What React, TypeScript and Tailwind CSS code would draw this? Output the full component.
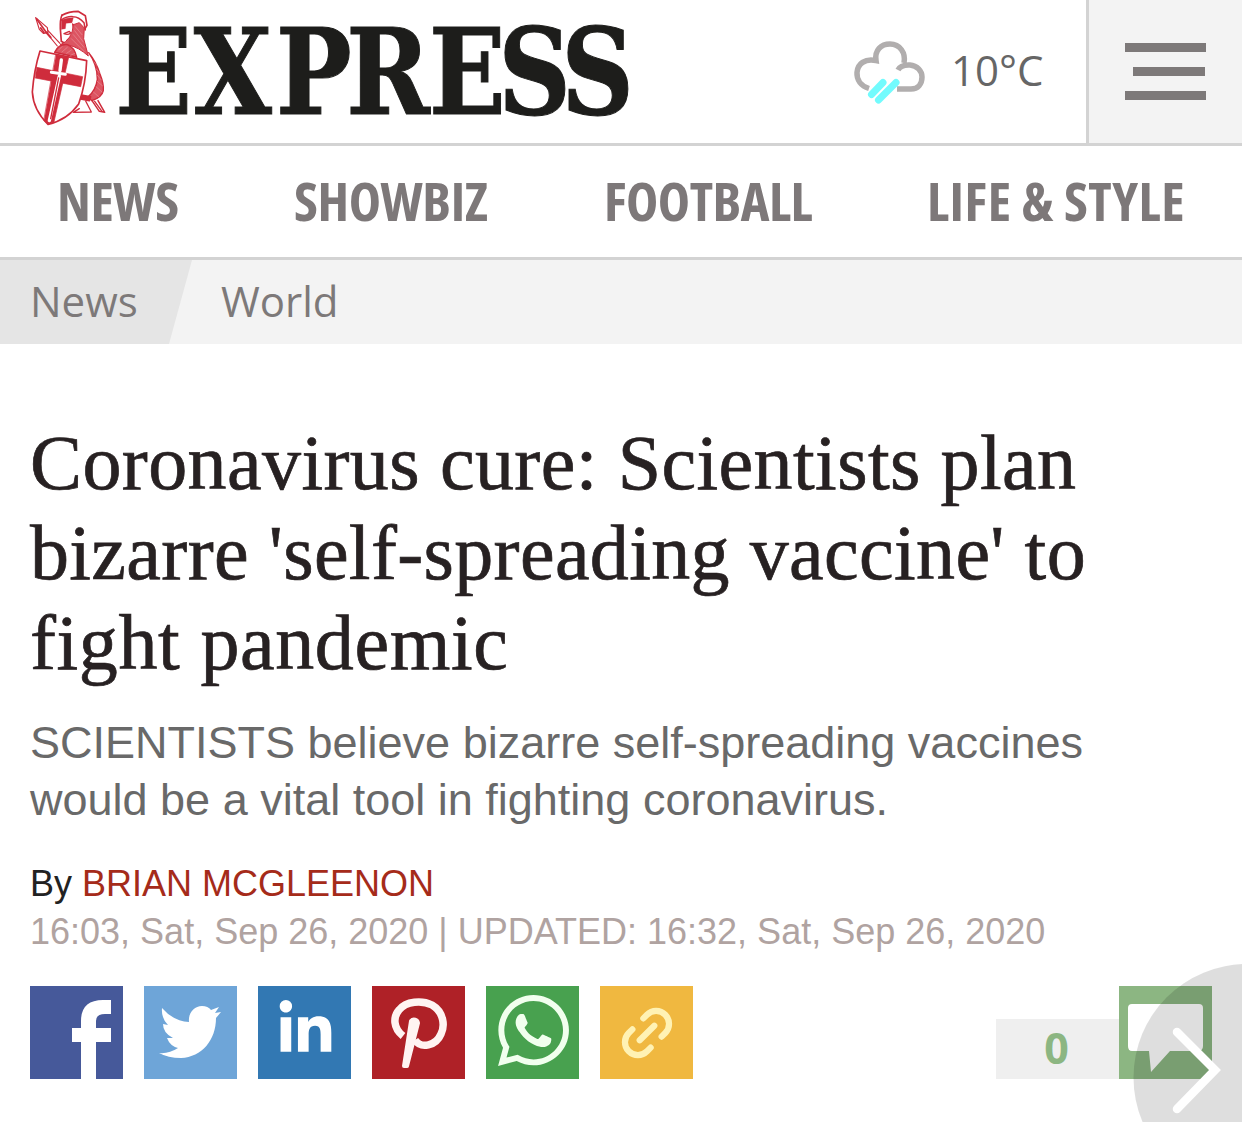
import type { ReactNode } from 'react';
import { FaLinkedinIn, FaWhatsapp } from 'react-icons/fa';
import { Link2 } from 'lucide-react';

function Crusader() {
  return (
    <g transform="translate(20 0) scale(0.3333)" stroke="#cf2c3c" fill="none" strokeWidth="4.5" strokeLinejoin="round" strokeLinecap="round">
      {/* lance */}
      <path d="M47 53 L82 83 L84 98 L70 100 L58 88 Z" strokeWidth="3.5" />
      <path d="M50 57 L76 93 M62 84 L72 98" strokeWidth="5" />
      <path d="M76 94 L112 138 M84 92 L120 130" strokeWidth="3.5" />
      <path d="M78 96 L92 112" strokeWidth="6" />
      {/* helmet and face */}
      <path d="M126 46 Q146 34 174 34 L196 47 L201 76 L195 86" strokeWidth="5" />
      <path d="M124 60 Q140 48 160 50 Q176 50 192 68 L196 90" strokeWidth="4.5" />
      <path d="M126 45 Q120 58 121 86 L124 124 L134 130" strokeWidth="5" />
      <path d="M124 60 Q140 53 160 53 L156 68 L138 70 L136 86 L124 88 Z" fill="#cf2c3c" strokeWidth="1" />
      <path d="M132 101 Q144 106 152 99 L148 94 Z M140 122 Q156 114 162 90 L158 72" strokeWidth="4" />
      <path d="M160 74 L178 68 L193 84 L191 116 L205 168 Q176 142 148 136 Q130 132 120 135 Q158 118 160 74 Z" fill="#dc5562" strokeWidth="3" />
      <path d="M166 80 L186 104 M164 92 L190 126 M160 104 L192 142 M154 116 L192 154" stroke="#efa0a8" strokeWidth="1.5" />
      {/* mail collar */}
      <path d="M104 157 Q116 132 142 134 Q164 142 170 172 L144 166 Z" fill="#dc5562" />
      <path d="M116 150 L126 140 M126 156 L142 142 M140 160 L154 150 M152 166 L164 160" stroke="#efa0a8" strokeWidth="1.5" />
      {/* cloak */}
      <path d="M206 158 Q228 184 240 222 Q252 252 250 272 Q246 292 216 302 L203 292 Q228 270 232 238 Q232 194 206 158 Z" fill="#dc5562" strokeWidth="4" />
      <path d="M222 186 L230 196 M228 206 L238 218 M232 226 L244 240 M232 244 L248 258 M228 260 L246 276 M220 276 L236 290" stroke="#efa0a8" strokeWidth="1.5" />
      {/* belt and scabbard */}
      <path d="M180 284 L212 290 L208 302 L178 296 Z" fill="#cf2c3c" />
      <path d="M197 303 L214 336 L160 337 L178 326" strokeWidth="4" />
      <path d="M216 302 L238 334 L254 337 L234 302" />
      <path d="M224 304 L246 334" strokeWidth="4" />
      {/* shield */}
      <path d="M60 153 L200 182 Q198 250 176 312 Q142 360 84 373 Q40 330 37 276 Q42 210 60 153 Z" fill="#fff" strokeWidth="5" />
      <path d="M50 202 L188 230 L182 260 L46 234 Z" fill="#cf2c3c" strokeWidth="2" />
      <path d="M108 164 L146 172 L102 366 L84 372 L72 362 Z" fill="#cf2c3c" strokeWidth="2" />
      {/* sword */}
      <path d="M124 180 L120 212 M118 228 L88 362" stroke="#fff" strokeWidth="10" />
      <path d="M94 217 L136 223" stroke="#fff" strokeWidth="9" />
      <path d="M116 234 L92 356" strokeWidth="4" />
    </g>
  );
}

function Logo() {
  return (
    <svg width="640" height="143" viewBox="0 0 640 143">
      <Crusader />
      <text
        transform="scale(0.94 1)"
        x="122.7 206 293.5 368.4 456.5 530 597"
        y="114"
        fill="#1d1d1b"
        stroke="#1d1d1b"
        strokeWidth="1"
        className="text-[119px] font-bold [font-family:'DejaVu_Serif',serif] [font-stretch:75%]"
      >
        EXPRESS
      </text>
    </svg>
  );
}

function RainCloud() {
  return (
    <svg width="72" height="66" viewBox="0 0 72 66" fill="none" className="mt-[2px]">
      <path
        d="M16 48.500 C8 46 3.500 40 4 32.500 C4.500 24 12 18 23 20.500 C21.500 10 28 4 37 4 C47 4 53 13 51 23 M45 30 C46 28 49 24.500 57 25 C64 25.500 69 31 69 37 C69 44 65 49 58 49 L44 49"
        stroke="#b1aeae"
        strokeWidth="5.500"
      />
      <path d="M30 42.500 L18.500 54.500 M43 42.500 L25.500 60" stroke="#72fbfd" strokeWidth="7" strokeLinecap="round" />
    </svg>
  );
}

const nav = [
  { label: 'NEWS', cls: 'ml-[57px] w-[237px] tracking-[-0.4px]' },
  { label: 'SHOWBIZ', cls: 'w-[310px] tracking-[-0.4px]' },
  { label: 'FOOTBALL', cls: 'w-[323px] tracking-[-0.5px]' },
  { label: 'LIFE & STYLE', cls: 'tracking-[0.5px]' },
];

function Tile({ bg, children }: { bg: string; children: ReactNode }) {
  return <a className={`block h-[93px] w-[93px] shrink-0 overflow-hidden text-white ${bg}`}>{children}</a>;
}

function ShareRow() {
  return (
    <div className="flex gap-[21px]">
      <Tile bg="bg-[#46599a]">
        <svg width="93" height="93" fill="#fff">
          <path d="M51 93V56H42V42H51V35Q51 14 73 14H81V28H75Q66 28 66 35V42H81V56H66V93Z" />
        </svg>
      </Tile>
      <Tile bg="bg-[#6ea5d8]">
        <svg width="93" height="93" fill="#fff">
          <path d="M18 22 Q29 35 45 36 C44 27 50 20 58 20 Q64 20 67 24 L75 21 L71 27 L77 26 L72 32 C72 54 58 71 37 72 Q24 72 15 67 Q25 68 34 62 Q26 60 23 52 L29 52 Q19 47 19 38 L24 39 Q17 32 18 22Z" />
        </svg>
      </Tile>
      <Tile bg="bg-[#3278b3]">
        <FaLinkedinIn size={59} className="mt-[14px] ml-[18px]" />
      </Tile>
      <Tile bg="bg-[#af2127]">
        <svg width="93" height="93" fill="none" stroke="#fff4f2" strokeWidth="7.5">
          <path d="M31 50 C21 42 21 31 27 24 C34 15 50 14 60 19 C72 26 73 40 69 48 C64 60 49 63 43 54" />
          <path d="M39 35 a4 4 0 0 1 7 2 L35 80 L32 80 Z" strokeWidth="4" fill="#fff4f2" strokeLinejoin="round" />
        </svg>
      </Tile>
      <Tile bg="bg-[#48a14f]">
        <FaWhatsapp size={81} className="mt-[4px] ml-[7px] text-[#f1ffee]" />
      </Tile>
      <Tile bg="bg-[#f0b840]">
        <Link2 size={62} strokeWidth={2.4} className="mt-[16px] ml-[16px] -rotate-45 text-[#fff2b4]" />
      </Tile>
    </div>
  );
}

function Comments() {
  return (
    <div className="mr-[30px] ml-auto flex items-end">
      <div className="flex h-[60px] w-[123px] items-center justify-center bg-[#efefef] pr-[2px] pb-[2px] text-[43px] font-bold text-[#8cb682] [font-family:'Open_Sans',sans-serif]">
        0
      </div>
      <svg width="93" height="93" className="bg-[#8cb682]" fill="#fff">
        <path d="M13 18H80Q84 18 84 22V60Q84 65 79 65H51L32 86L30 65H13Q9 65 9 60V22Q9 18 13 18Z" />
      </svg>
    </div>
  );
}

export default function App() {
  return (
    <div className="relative h-[1122px] w-[1242px] overflow-hidden bg-white [font-family:'Liberation_Sans',Arial,sans-serif]">
      <header className="flex h-[146px] border-b-[3px] border-[#d3d3d3]">
        <Logo />
        <div className="ml-auto flex items-center">
          <RainCloud />
          <span className="ml-[26px] w-[135px] pb-[4px] text-[42px] leading-none text-[#666] [font-family:'Open_Sans',sans-serif]">10°C</span>
        </div>
        <button className="flex w-[156px] flex-col justify-center gap-[15px] border-l-[3px] border-[#d3d3d3] bg-[#f3f3f3] pl-[36px]">
          <span className="h-[9px] w-[81px] bg-[#7d7979]" />
          <span className="ml-[8px] h-[9px] w-[72px] bg-[#7d7979]" />
          <span className="h-[9px] w-[81px] bg-[#7d7979]" />
        </button>
      </header>

      <nav className="flex h-[114px] items-center border-b-[3px] border-[#d3d3d3] pb-[3px] text-[54.5px] leading-none font-bold whitespace-nowrap text-[#7d7879] [font-family:'Open_Sans',sans-serif] [font-stretch:75%]">
        {nav.map((n) => (
          <a key={n.label} className={n.cls}>
            {n.label}
          </a>
        ))}
      </nav>

      <div className="flex h-[84px] bg-[#f3f3f3] text-[42px] text-[#7d7979] [font-family:'Open_Sans',sans-serif]">
        <a className="flex w-[192px] items-center bg-[#e5e5e5] pb-[3px] pl-[30px] [clip-path:polygon(0_0,100%_0,169px_100%,0_100%)]">News</a>
        <a className="flex items-center pb-[3px] pl-[29px]">World</a>
      </div>

      <article className="pt-[74px]">
        <h1 className="pl-[30px] text-[78px] leading-[90px] whitespace-nowrap text-[#272122] [-webkit-text-stroke:0.7px_#272122] [font-family:'Liberation_Serif',Georgia,serif]">
          <span className="block tracking-[0.4px]">Coronavirus cure: Scientists plan</span>
          <span className="block tracking-[0.35px]">bizarre 'self-spreading vaccine' to</span>
          <span className="block tracking-[0.6px]">fight pandemic</span>
        </h1>
        <p className="mt-[26px] pl-[30px] text-[45px] leading-[57px] text-[#696969]">
          SCIENTISTS believe bizarre self-spreading vaccines
          <br />
          would be a vital tool in fighting coronavirus.
        </p>
        <div className="mt-[32px] pl-[30px] text-[36px] leading-[48px]">
          <div className="text-[#222]">
            By <span className="text-[#a52b1a]">BRIAN MCGLEENON</span>
          </div>
          <div className="text-[#b0a3a1]">16:03, Sat, Sep 26, 2020 | UPDATED: 16:32, Sat, Sep 26, 2020</div>
        </div>
        <div className="mt-[30px] flex pl-[30px]">
          <ShareRow />
          <Comments />
        </div>
      </article>

      <svg className="absolute right-0 bottom-0" width="112" height="160" viewBox="1130 962 112 160">
        <circle cx="1247" cy="1077.500" r="113.500" fill="#000" fillOpacity="0.13" />
        <path d="M1177 1032 L1215 1070 L1177 1109" fill="none" stroke="#fff" strokeWidth="8.500" strokeLinecap="round" />
      </svg>
    </div>
  );
}
